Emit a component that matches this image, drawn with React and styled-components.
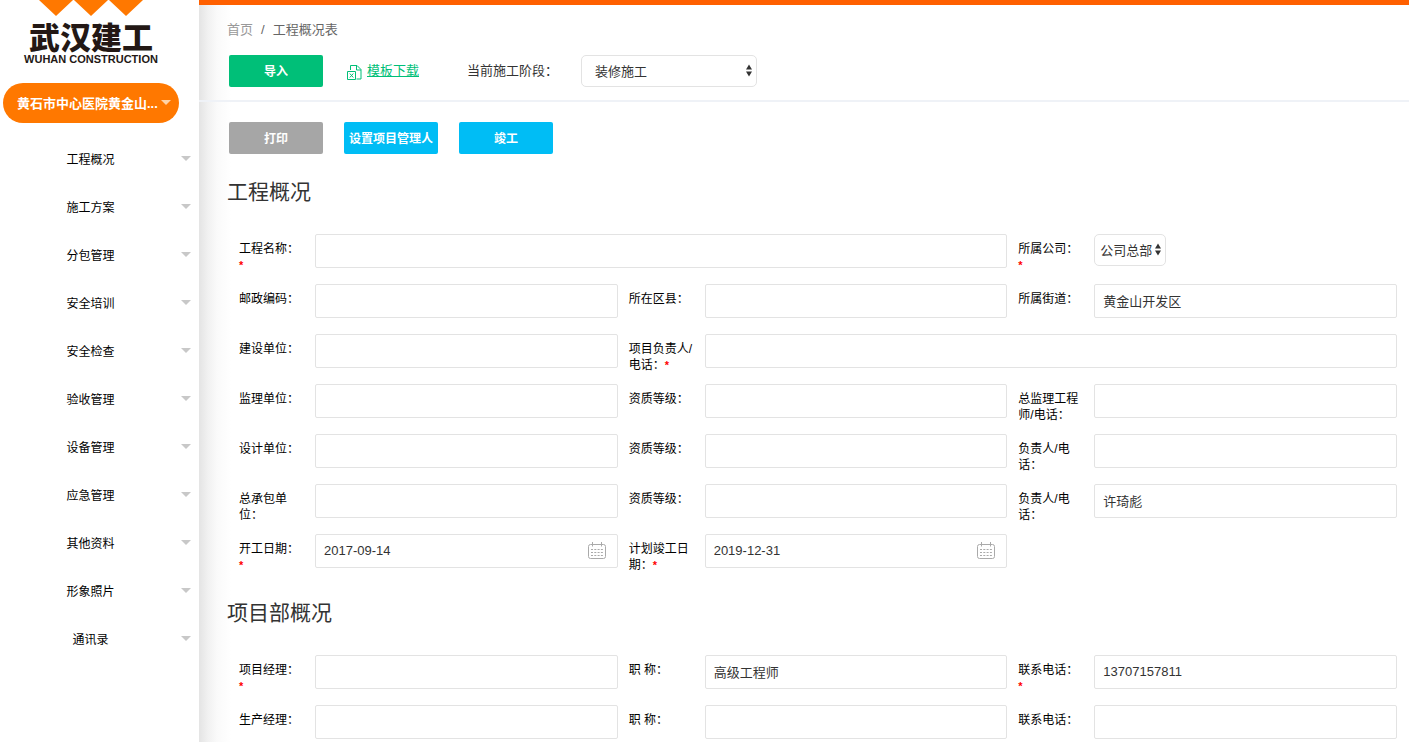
import React, { useId, useState } from 'react';
import styled, { createGlobalStyle } from 'styled-components';

const GlobalStyle = createGlobalStyle`
  *, *::before, *::after {
    box-sizing: border-box;
  }

  body {
    margin: 0;
    background: #fff;
    color: #333;
  }

  body, button, input, select {
    font-family: "Liberation Sans", "Noto Sans CJK SC", sans-serif;
    font-size: 13px;
  }
`;

const Layout = styled.div`
  display: flex;
  min-height: 100vh;
`;

const Sidebar = styled.aside`
  flex: 0 0 199px;
  background: #fff;
`;

const Logo = styled.div`
  display: flex;
  flex-direction: column;
  align-items: center;
  width: 182px;
  color: #231815;
`;

const LogoMark = styled.svg`
  display: block;
`;

const LogoName = styled.span`
  margin-top: 3px;
  font-family: "Noto Sans CJK SC", sans-serif;
  font-size: 31px;
  font-weight: 900;
  line-height: 34px;
`;

const LogoSub = styled.span`
  font-size: 11px;
  font-weight: bold;
  line-height: 12px;
  white-space: nowrap;
`;

const Caret = styled.span`
  flex: none;
  border: 5px solid transparent;
  border-top-color: ${({ $light }) => ($light ? '#ffd2a6' : '#c8c8c8')};
  border-bottom: 0;
`;

const ProjectButton = styled.button`
  display: flex;
  align-items: center;
  justify-content: space-between;
  width: 176px;
  height: 40px;
  margin: 18px 0 0 3px;
  padding: 0 8px 2px 14px;
  border: none;
  border-radius: 20px;
  background: #ff7800;
  color: #fff;
  font-weight: bold;
  cursor: pointer;
`;

const Menu = styled.ul`
  margin: 11px 0 0;
  padding: 0;
  list-style: none;
`;

const MenuLink = styled.a`
  display: flex;
  align-items: center;
  height: 48px;
  padding-right: 8px;
  color: #000;
  font-size: 12px;
  text-decoration: none;

  &:hover {
    color: #ff7800;
  }
`;

const MenuText = styled.span`
  flex: 1;
  text-align: center;
`;

const Main = styled.main`
  flex: 1;
  min-width: 0;
  border-top: 5px solid #ff6000;
  background: linear-gradient(to right, #e4e4e4, #f1f1f1 9px, #fafafa 18px, #fff 32px) no-repeat;
`;

const Header = styled.header`
  padding: 15px 28px 13px;
  border-bottom: 2px solid #eff2f7;
`;

const Breadcrumb = styled.nav`
  display: flex;
  gap: 8px;
  color: #666;
  line-height: 20px;

  a {
    color: #999;
    text-decoration: none;
  }
`;

const HeaderTools = styled.div`
  display: flex;
  align-items: center;
  margin: 15px 0 0 2px;
`;

const Button = styled.button`
  min-width: 94px;
  height: 32px;
  padding: 0 5px 2px;
  border: none;
  border-radius: 2px;
  background: ${({ $color }) => $color};
  color: #fff;
  font-size: 12px;
  font-weight: bold;
  cursor: pointer;
`;

const Download = styled.a`
  display: flex;
  align-items: center;
  gap: 5px;
  margin: 0 48px 0 24px;
  padding-bottom: 3px;
  color: #00bf78;

  svg {
    margin-top: 6px;
  }
`;

const StageLabel = styled.label`
  margin-right: 23px;
  padding-bottom: 3px;
`;

const SelectBox = styled.span`
  position: relative;
  display: inline-block;
  width: ${({ $wide }) => ($wide ? '176px' : '72px')};
  height: 32px;

  select {
    width: 100%;
    height: 100%;
    padding: 0 ${({ $wide }) => ($wide ? '13px' : '5px')};
    border: 1px solid #e3e3e3;
    border-radius: 5px;
    background: #fff;
    color: #333;
    appearance: none;
  }

  svg {
    position: absolute;
    top: 9px;
    right: 4px;
    pointer-events: none;
  }
`;

const Content = styled.div`
  padding: 20px 12px 2px 28px;
`;

const Actions = styled.div`
  display: flex;
  gap: 21px;
  margin: 0 0 23px 2px;
`;

const Section = styled.section`
  & + & {
    margin-top: 30px;
  }
`;

const Title = styled.h2`
  margin: 0 0 27px;
  font-size: 21px;
  font-weight: normal;
  line-height: 30px;
`;

const FormGrid = styled.div`
  display: grid;
  grid-template-columns: repeat(3, minmax(0, 1fr));
  gap: 16px 11px;
  margin-left: 12px;
`;

const FieldBox = styled.div`
  display: flex;
  grid-column: span ${({ $span }) => $span};
  height: 34px;
`;

const FieldLabel = styled.label`
  flex: 0 0 64px;
  margin-right: 12px;
  padding-top: 7px;
  color: #000;
  font-size: 12px;
  line-height: 16px;
`;

const Star = styled.span`
  color: #f00;
  font-size: 11px;
  font-weight: bold;
`;

const Control = styled.div`
  position: relative;
  flex: 1;
  min-width: 0;
`;

const Input = styled.input`
  display: block;
  width: 100%;
  height: 34px;
  padding: 0 8px 2px;
  border: 1px solid #e3e3e3;
  border-radius: 2px;
  background: #fff;
  color: #333;

  &:focus {
    outline: none;
    border-color: #00bdf5;
  }
`;

const CalendarSlot = styled.span`
  position: absolute;
  top: 8px;
  right: 12px;
  line-height: 0;
  pointer-events: none;
`;

const menuItems = [
  '工程概况',
  '施工方案',
  '分包管理',
  '安全培训',
  '安全检查',
  '验收管理',
  '设备管理',
  '应急管理',
  '其他资料',
  '形象照片',
  '通讯录',
];

const projectFields = [
  { label: '工程名称：', required: true, span: 2 },
  { label: '所属公司：', required: true, options: ['公司总部'] },
  { label: '邮政编码：' },
  { label: '所在区县：' },
  { label: '所属街道：', value: '黄金山开发区' },
  { label: '建设单位：' },
  { label: '项目负责人/电话：', required: true, span: 2 },
  { label: '监理单位：' },
  { label: '资质等级：' },
  { label: '总监理工程师/电话：' },
  { label: '设计单位：' },
  { label: '资质等级：' },
  { label: '负责人/电话：' },
  { label: '总承包单位：' },
  { label: '资质等级：' },
  { label: '负责人/电话：', value: '许琦彪' },
  { label: '开工日期：', required: true, value: '2017-09-14', date: true },
  { label: '计划竣工日期：', required: true, value: '2019-12-31', date: true },
];

const departmentFields = [
  { label: '项目经理：', required: true },
  { label: '职 称：', value: '高级工程师' },
  { label: '联系电话：', required: true, value: '13707157811' },
  { label: '生产经理：' },
  { label: '职 称：' },
  { label: '联系电话：' },
];

const SortArrows = () => (
  <svg width="8" height="13" viewBox="0 0 8 13" fill="#333" aria-hidden="true">
    <path d="M4 0.5 7 5.5H1zM4 12.5 7 7.5H1z" />
  </svg>
);

const ExcelIcon = () => (
  <svg width="15" height="15" viewBox="0 0 15 15" fill="none" stroke="#00bf78" aria-hidden="true">
    <path d="M3.5 5V.5h6.500l4 4v9.500H9.500M9.500 .5v4.500H14" />
    <path d="M.5 6.500h8v8h-8zM2.800 8.500l3.500 4M6.300 8.500l-3.500 4" />
  </svg>
);

const CalendarIcon = () => (
  <svg width="18" height="17" viewBox="0 0 18 17" fill="none" stroke="#aaa" aria-hidden="true">
    <rect x=".5" y="2.500" width="17" height="14" rx="2" />
    <path d="M4.500 0v4.500M13.500 0v4.500" />
    <path d="M3 7.500h12M3 10.500h12M3 13.500h12" strokeDasharray="2 1.300" />
  </svg>
);

const Field = ({ label, required, span = 1, value = '', date, options }) => {
  const id = useId();
  const [current, setCurrent] = useState(value);

  return (
    <FieldBox $span={span}>
      <FieldLabel htmlFor={id}>
        {label}
        {required && <Star>*</Star>}
      </FieldLabel>
      <Control>
        {options ? (
          <SelectBox>
            <select id={id}>
              {options.map((option) => (
                <option key={option}>{option}</option>
              ))}
            </select>
            <SortArrows />
          </SelectBox>
        ) : (
          <Input
            id={id}
            type="text"
            value={current}
            onChange={(e) => setCurrent(e.target.value)}
          />
        )}
        {date && (
          <CalendarSlot>
            <CalendarIcon />
          </CalendarSlot>
        )}
      </Control>
    </FieldBox>
  );
};

const FormSection = ({ title, fields }) => (
  <Section>
    <Title>{title}</Title>
    <FormGrid>
      {fields.map((field, index) => (
        <Field key={index} {...field} />
      ))}
    </FormGrid>
  </Section>
);

const App = () => {
  return (
    <>
      <GlobalStyle />
      <Layout>
        <Sidebar>
          <Logo>
            <LogoMark width="104" height="16" viewBox="0 0 104 16" fill="#ff7800" aria-hidden="true">
              <path d="M0 0h34L17 16zM35 0h34L52 16zM70 0h34L87 16z" />
            </LogoMark>
            <LogoName>武汉建工</LogoName>
            <LogoSub>WUHAN CONSTRUCTION</LogoSub>
          </Logo>
          <ProjectButton type="button">
            黄石市中心医院黄金山...
            <Caret $light />
          </ProjectButton>
          <Menu>
            {menuItems.map((item) => (
              <li key={item}>
                <MenuLink href="#">
                  <MenuText>{item}</MenuText>
                  <Caret />
                </MenuLink>
              </li>
            ))}
          </Menu>
        </Sidebar>

        <Main>
          <Header>
            <Breadcrumb>
              <a href="#">首页</a>
              <span>/</span>
              <span>工程概况表</span>
            </Breadcrumb>
            <HeaderTools>
              <Button type="button" $color="#00bf78">导入</Button>
              <Download href="#">
                <ExcelIcon />
                模板下载
              </Download>
              <StageLabel htmlFor="stage">当前施工阶段：</StageLabel>
              <SelectBox $wide>
                <select id="stage">
                  <option>装修施工</option>
                </select>
                <SortArrows />
              </SelectBox>
            </HeaderTools>
          </Header>

          <Content>
            <Actions>
              <Button type="button" $color="#a6a6a6">打印</Button>
              <Button type="button" $color="#00bdf5">设置项目管理人</Button>
              <Button type="button" $color="#00bdf5">竣工</Button>
            </Actions>
            <FormSection title="工程概况" fields={projectFields} />
            <FormSection title="项目部概况" fields={departmentFields} />
          </Content>
        </Main>
      </Layout>
    </>
  );
};

export default App;
